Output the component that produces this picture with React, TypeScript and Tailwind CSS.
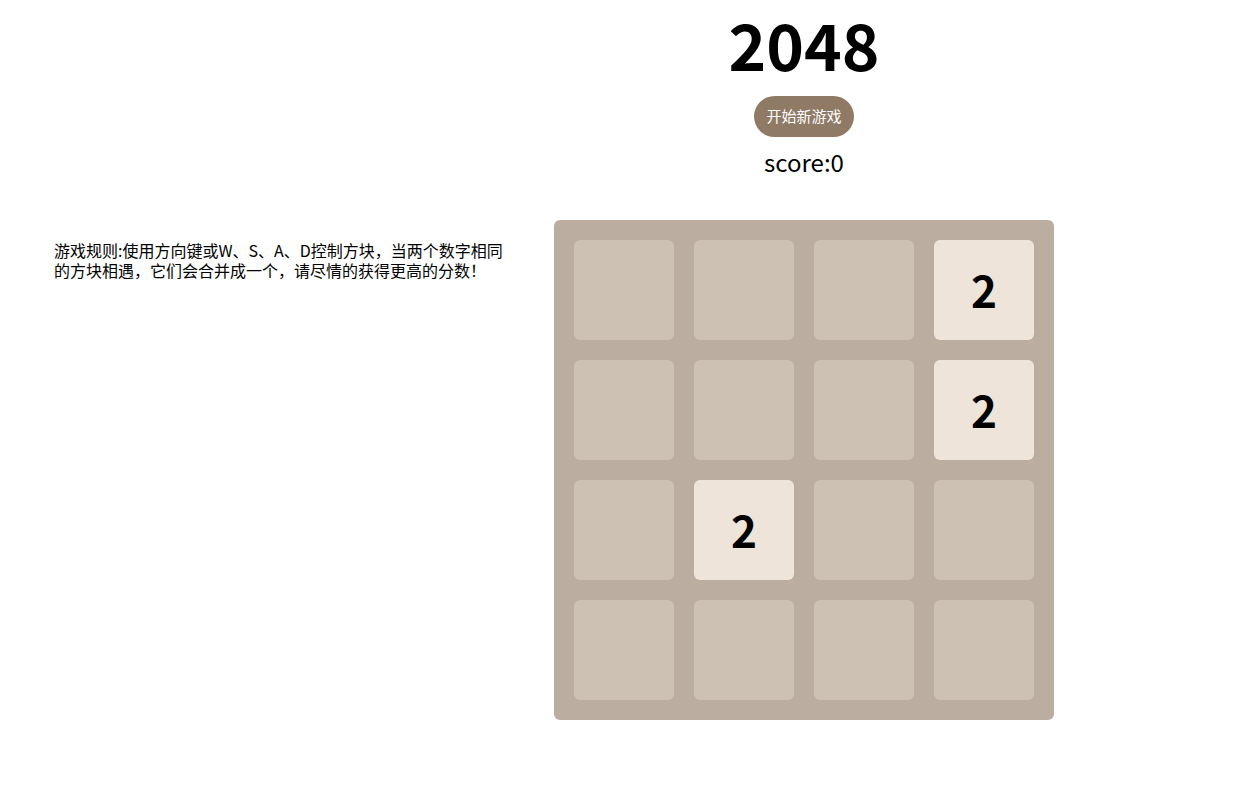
import { useState } from "react";

const font = { fontFamily: '"Noto Sans CJK SC", "Noto Sans", sans-serif' };

export default function App() {
  // board state, 0 = empty
  const [board] = useState<number[][]>([
    [0, 0, 0, 2],
    [0, 0, 0, 2],
    [0, 2, 0, 0],
    [0, 0, 0, 0],
  ]);
  const [score] = useState(0);

  return (
    <div className="flex min-h-screen bg-white text-black" style={font}>
      {/* Rules */}
      <div className="ml-[54px] mt-[240px] w-[460px] text-[16px] leading-[20px]">
        游戏规则:使用方向键或W、S、A、D控制方块，当两个数字相同的方块相遇，它们会合并成一个，请尽情的获得更高的分数！
      </div>

      {/* Game */}
      <div className="ml-[40px] flex w-[500px] flex-col items-center">
        <h1 className="text-[64px] font-bold leading-[86px]">2048</h1>
        <button className="mt-[10px] h-[41px] w-[100px] rounded-full bg-[#8f7a66] text-[15px] text-white">
          开始新游戏
        </button>
        <div className="mt-[8px] text-[24px] leading-[34px]">score:{score}</div>

        <div className="mt-[41px] grid w-[500px] grid-cols-4 gap-[20px] rounded-[6px] bg-[#bbada0] p-[20px]">
          {board.flat().map((v, i) => (
            <div
              key={i}
              className={
                v
                  ? "flex h-[100px] w-[100px] items-center justify-center rounded-[6px] bg-[#eee4da] pb-[2px] text-[44px] font-bold"
                  : "h-[100px] w-[100px] rounded-[6px] bg-[#cdc1b4]"
              }
            >
              {v ? v : null}
            </div>
          ))}
        </div>
      </div>
    </div>
  );
}
